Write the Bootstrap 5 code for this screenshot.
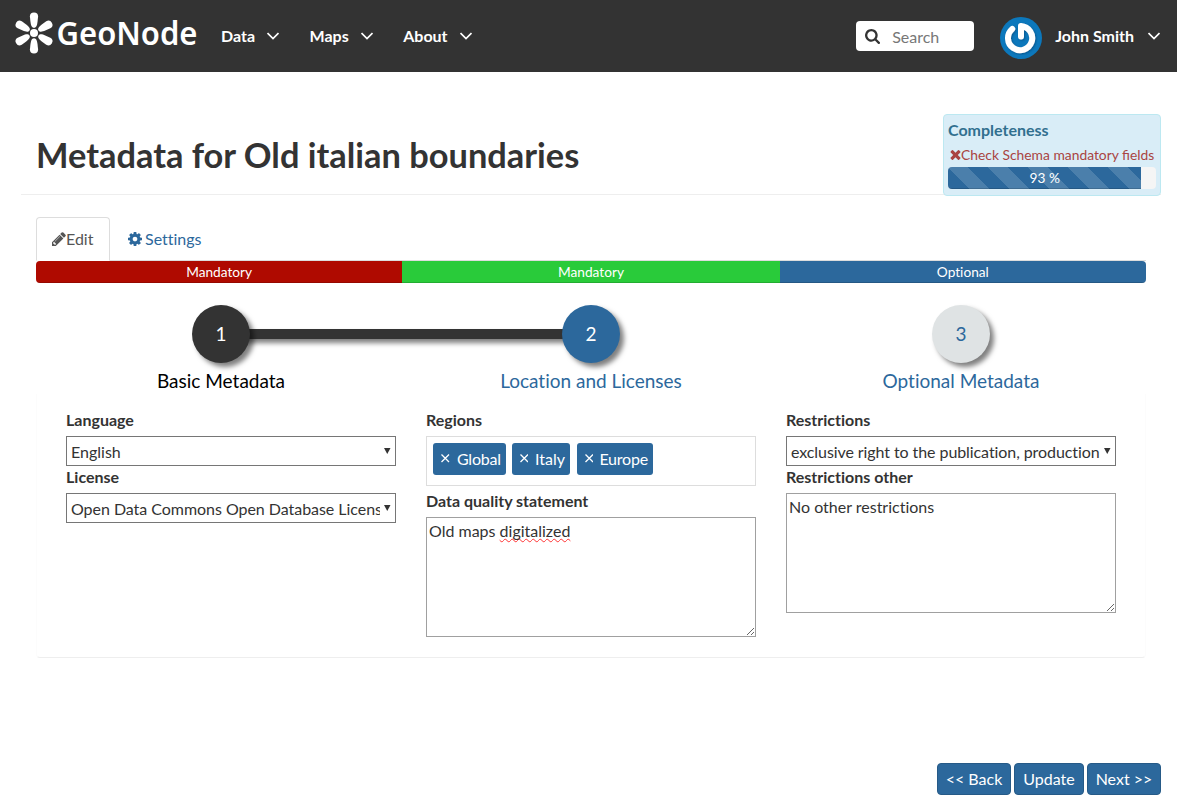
<!DOCTYPE html>
<html lang="en">
<head>
<meta charset="utf-8">
<meta name="viewport" content="width=device-width, initial-scale=1">
<title>Metadata - GeoNode</title>
<link href="https://cdn.jsdelivr.net/npm/bootstrap@5.3.0/dist/css/bootstrap.min.css" rel="stylesheet">
<style>
:root{--geo-blue:#2c689c;--geo-dark:#333}
body{font-family:Lato,sans-serif;font-size:16px;line-height:1.42857;color:#333;min-height:809px;background:#fff;font-variant-ligatures:none}
a{text-decoration:none;color:var(--geo-blue)}
.topbar{height:72px;background:var(--geo-dark);padding:0 17px 0 14px}
.topbar .nav-link{color:#fff;font-weight:700;padding:0;display:flex;align-items:center;line-height:22px}
.topbar .nav-link svg{margin-left:12px}
.main-nav{margin-left:21px;gap:30.500px}
.topbar .brand-mark{overflow:visible}
.searchbox{width:118px;height:30px;background:#fff;border-radius:4px;padding-left:9px;margin-right:26px}
.searchbox input{border:0;outline:0;width:75px;padding:2px 0 0;margin-left:12px;font-size:16px;background:none}
.searchbox input::placeholder{color:#777;opacity:1}
.fa-i{fill:currentColor;flex:none}
.page-head{margin:0 16px 0 21px;height:123px;border-bottom:1px solid #eee;padding:61px 0 0 15px}
.page-head h1{font-size:34.400px;font-weight:700;line-height:44px;margin:0}
.complete-box{top:114px;right:16px;width:218px;height:82px;background:#d9edf7;border:1px solid #bce8f1;border-radius:4px;padding:3px 4px 0}
.complete-box h4{font-size:16px;line-height:24px;font-weight:700;color:#31708f;margin:0}
.complete-box p{font-size:13.850px;line-height:20px;color:#a94442;margin:3px 0 2px 2px;white-space:nowrap;font-variant-ligatures:normal}
.progress{--bs-progress-height:22px;--bs-progress-font-size:13.700px;--bs-progress-border-radius:4px;--bs-progress-bg:#f5f5f5;--bs-progress-bar-bg:var(--geo-blue)}
.progress-bar{line-height:22px;box-shadow:inset 0 -1px 0 rgba(0,0,0,.15)}
.progress-bar-striped{background-size:40px 40px}
.workspace{margin:22px 31px 0 36px}
.nav-tabs{height:44px;border-bottom:1px solid #ddd;gap:2px}
.nav-tabs .nav-link{height:44px;padding:0 15px 2px;border-radius:4px 4px 0 0;color:var(--geo-blue);display:flex;align-items:center;line-height:23px}
.nav-tabs .nav-link.active{color:#555;border-color:#ddd #ddd #fff;width:74px}
.nav-tabs svg{margin-top:2px}
.required{background:#af0a00}
.valid-part{background:#29cb3a}
.steps{margin-top:22px;position:relative}
.step-link{font-size:19px;line-height:27px;color:var(--geo-blue)}
.step-dot{width:58px;height:58px;border-radius:50%;box-shadow:4px 4px 5px rgba(0,0,0,.5);margin:0 auto 4px;padding-bottom:1px;background:#dfe3e4}
.step-dot.done{background:var(--geo-dark);color:#fff}
.step-dot.current{background:var(--geo-blue);color:#fff}
.step-track{position:absolute;top:24px;left:16.667%;width:33.333%;height:10px;background:var(--geo-dark);box-shadow:4px 4px 5px rgba(0,0,0,.5)}
.form-panel{border:1px solid #fcfcfc;border-bottom-color:#eee;border-radius:0 0 4px 4px;border-top:0;height:264px;padding:14px 29px 0;gap:30px}
.form-panel>div{width:330px}
.form-panel label{display:block;font-weight:700;line-height:23px;height:28px}
.pick{position:relative}
.pick select{display:block;width:330px;height:30px;appearance:none;border:1px solid #767676;background:#fff;color:#333;padding:2px 15px 0 4px;font-size:16px;border-radius:0}
.pick svg{position:absolute;right:5px;top:12px}
.form-panel .next-label{height:27px;line-height:21px}
.tags{border:1px solid #ddd;height:50px;padding:6px}
.tag-item{background:var(--geo-blue);color:#fff;border-radius:3px;height:32px;padding:0 5px 1px 8px;line-height:31px}
.tag-item svg{margin-right:7px}
.note{border:1px solid #a0a0a0;height:120px;padding:1px 2px;line-height:23px;resize:both;overflow:auto}
.misspelt{text-decoration:underline wavy #f33 1px;text-underline-offset:1px;text-decoration-skip-ink:none}
.actions{margin:105px 16px 0 0;gap:3px}
.actions .btn{background:var(--geo-blue);color:#fff;border:1px solid #265a87;border-radius:4px;height:32px;line-height:22px;padding:4px 0;width:74px;font-size:16px}
</style>
</head>
<body>
<header class="topbar d-flex align-items-center">
  <a href="#" aria-label="GeoNode" class="d-block"><svg width="186" height="72" viewBox="14 0 186 72" class="d-block brand-mark">
    <defs><path id="petal" d="M34 27.800C31.600 27.800 30.900 25 30.500 22L29.900 16.500a4.100 4.100 0 0 1 8.200 0L37.500 22C37.100 25 36.400 27.800 34 27.800Z"/></defs>
    <g fill="#fff"><circle cx="34" cy="33" r="4"/>
    <use href="#petal"/><use href="#petal" transform="rotate(60 34 33)"/><use href="#petal" transform="rotate(120 34 33)"/><use href="#petal" transform="rotate(180 34 33)"/><use href="#petal" transform="rotate(240 34 33)"/><use href="#petal" transform="rotate(300 34 33)"/>
    <text x="56.500" y="45" font-family="Noto Sans,sans-serif" font-size="33" font-weight="600" textLength="141" lengthAdjust="spacingAndGlyphs">GeoNode</text></g>
  </svg></a>
  <nav class="main-nav d-flex">
    <a class="nav-link" href="#">Data<svg width="12" height="8" fill="none" stroke="#fff" stroke-width="1.700"><path d="M.5 1 6 6.500 11.500 1"/></svg></a>
    <a class="nav-link" href="#">Maps<svg width="12" height="8" fill="none" stroke="#fff" stroke-width="1.700"><path d="M.5 1 6 6.500 11.500 1"/></svg></a>
    <a class="nav-link" href="#">About<svg width="12" height="8" fill="none" stroke="#fff" stroke-width="1.700"><path d="M.5 1 6 6.500 11.500 1"/></svg></a>
  </nav>
  <div class="searchbox d-flex align-items-center ms-auto">
    <svg class="fa-i" width="15" height="15" viewBox="64 128 1664 1664"><path d="M1216 832q0-185-131.500-316.500t-316.500-131.500-316.500 131.500-131.500 316.500 131.500 316.500 316.500 131.500 316.500-131.500 131.500-316.500zm512 832q0 52-38 90t-90 38q-54 0-90-38l-343-342q-179 124-399 124-143 0-273.500-55.500t-225-150-150-225-55.500-273.500 55.500-273.500 150-225 225-150 273.500-55.500 273.500 55.500 225 150 150 225 55.500 273.500q0 220-124 399l343 343q37 37 37 90z"/></svg>
    <input type="text" placeholder="Search" aria-label="Search">
  </div>
  <svg width="42" height="42" viewBox="0 0 42 42" style="margin-top:4px">
    <defs><filter id="soft" x="-20%" y="-20%" width="140%" height="140%"><feDropShadow dx="1" dy="1" stdDeviation=".8" flood-color="#03406f" flood-opacity=".6"/></filter></defs>
    <circle cx="21" cy="21" r="21" fill="#0c78bc"/>
    <path d="M12.200 11.900A12.100 12.100 0 1 0 21 9V19.500" fill="none" stroke="#fff" stroke-width="6" stroke-linecap="round" stroke-linejoin="round" filter="url(#soft)"/>
  </svg>
  <a class="nav-link" href="#" style="margin-left:13px">John Smith<svg style="margin-left:14px" width="12" height="8" fill="none" stroke="#fff" stroke-width="1.700"><path d="M.5 1 6 6.500 11.500 1"/></svg></a>
</header>

<div class="page-head"><h1>Metadata for Old italian boundaries</h1></div>
<aside class="complete-box position-absolute">
  <h4>Completeness</h4>
  <p class="d-flex align-items-center"><svg class="fa-i" width="11" height="10" viewBox="302 366 1188 1188"><path d="M1490 1322q0 40-28 68l-136 136q-28 28-68 28t-68-28l-294-294-294 294q-28 28-68 28t-68-28l-136-136q-28-28-28-68t28-68l294-294-294-294q-28-28-28-68t28-68l136-136q28-28 68-28t68 28l294 294 294-294q28-28 68-28t68 28l136 136q28 28 28 68t-28 68l-294 294 294 294q28 28 28 68z"/></svg>Check Schema mandatory fields</p>
  <div class="progress"><div class="progress-bar progress-bar-striped" style="width:93%">93 %</div></div>
</aside>

<main class="workspace">
  <ul class="nav nav-tabs">
    <li class="nav-item"><a class="nav-link active" href="#"><svg class="fa-i" width="14" height="14" viewBox="128 128 1536 1536"><path d="M491 1536l91-91-235-235-91 91v107h128v128h107zm523-928q0-22-22-22-10 0-17 7l-542 542q-7 7-7 17 0 22 22 22 10 0 17-7l542-542q7-7 7-17zm-54-192l416 416-832 832h-416v-416zm683 96q0 53-37 90l-166 166-416-416 166-165q36-38 90-38 53 0 91 38l235 234q37 39 37 91z"/></svg>Edit</a></li>
    <li class="nav-item"><a class="nav-link" href="#"><svg class="fa-i" width="14" height="14" style="margin-right:3px" viewBox="128 128 1536 1536"><path d="M1152 896q0-106-75-181t-181-75-181 75-75 181 75 181 181 75 181-75 75-181zm512-109v222q0 12-8 23t-20 13l-185 28q-19 54-39 91 35 50 107 138 10 12 10 25t-9 23q-27 37-99 108t-94 71q-12 0-26-9l-138-108q-44 23-91 38-16 136-29 186-7 28-36 28h-222q-14 0-24.500-8.500t-11.500-21.500l-28-184q-49-16-90-37l-141 107q-10 9-25 9-14 0-25-11-126-114-165-168-7-10-7-23 0-12 8-23 15-21 51-66.500t54-70.500q-27-50-41-99l-183-27q-13-2-21-12.500t-8-23.500v-222q0-12 8-23t19-13l186-28q14-46 39-92-40-57-107-138-10-12-10-24 0-10 9-23 26-36 98.500-107.500t94.500-71.500q13 0 26 10l138 107q44-23 91-38 16-136 29-186 7-28 36-28h222q14 0 24.500 8.500t11.500 21.500l28 184q49 16 90 37l142-107q9-9 24-9 13 0 25 10 129 119 165 170 7 8 7 22 0 12-8 23-15 21-51 66.500t-54 70.500q26 50 41 98l183 28q13 2 21 12.500t8 23.500z"/></svg>Settings</a></li>
  </ul>
  <div class="progress">
    <div class="progress-bar required" style="width:33%">Mandatory</div>
    <div class="progress-bar valid-part" style="width:34%">Mandatory</div>
    <div class="progress-bar" style="width:33%">Optional</div>
  </div>
  <div class="steps">
    <div class="step-track"></div>
    <div class="row g-0 text-center position-relative">
      <a href="#" class="col step-link" style="color:#000"><span class="step-dot done d-flex align-items-center justify-content-center">1</span>Basic Metadata</a>
      <a href="#" class="col step-link"><span class="step-dot current d-flex align-items-center justify-content-center">2</span>Location and Licenses</a>
      <a href="#" class="col step-link"><span class="step-dot d-flex align-items-center justify-content-center">3</span>Optional Metadata</a>
    </div>
  </div>
  <form class="form-panel d-flex">
    <div>
      <label for="lang">Language</label>
      <div class="pick"><select id="lang"><option>English</option></select><svg width="7" height="6"><path d="M0 0H6.500L3.250 6Z" fill="#333"/></svg></div>
      <label for="lic" class="next-label">License</label>
      <div class="pick"><select id="lic" style="letter-spacing:-.04px"><option>Open Data Commons Open Database License/OSM</option></select><svg width="7" height="6"><path d="M0 0H6.500L3.250 6Z" fill="#333"/></svg></div>
    </div>
    <div>
      <label>Regions</label>
      <div class="tags d-flex">
        <span class="tag-item d-flex align-items-center" style="width:73px;margin-right:6px;letter-spacing:-.25px"><svg width="9" height="9" stroke="#fff" stroke-width="1.300"><path d="M.5.5 8 8M8 .5.5 8"/></svg>Global</span>
        <span class="tag-item d-flex align-items-center" style="width:58px;margin-right:7px"><svg width="9" height="9" stroke="#fff" stroke-width="1.300"><path d="M.5.5 8 8M8 .5.5 8"/></svg>Italy</span>
        <span class="tag-item d-flex align-items-center" style="width:76px;letter-spacing:-.2px"><svg width="9" height="9" stroke="#fff" stroke-width="1.300" style="margin-right:6px"><path d="M.5.5 8 8M8 .5.5 8"/></svg>Europe</span>
      </div>
      <label style="margin-top:4px" class="next-label">Data quality statement</label>
      <div class="note">Old maps <span class="misspelt">digitalized</span></div>
    </div>
    <div>
      <label for="restr">Restrictions</label>
      <div class="pick"><select id="restr" style="letter-spacing:-.08px"><option>exclusive right to the publication, production, or sale</option></select><svg width="7" height="6"><path d="M0 0H6.500L3.250 6Z" fill="#333"/></svg></div>
      <label class="next-label">Restrictions other</label>
      <div class="note">No other restrictions</div>
    </div>
  </form>
</main>
<div class="actions d-flex justify-content-end">
  <button class="btn">&lt;&lt; Back</button>
  <button class="btn" style="width:70px">Update</button>
  <button class="btn">Next &gt;&gt;</button>
</div>
<script src="https://cdn.jsdelivr.net/npm/bootstrap@5.3.0/dist/js/bootstrap.bundle.min.js"></script>
</body>
</html>
